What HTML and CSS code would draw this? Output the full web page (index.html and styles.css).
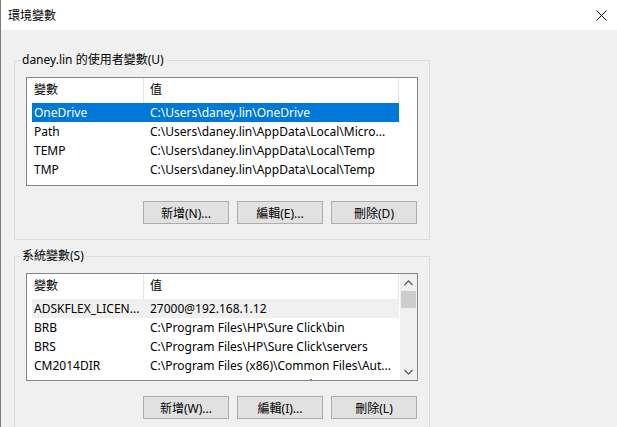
FILE: index.html
```html
<!DOCTYPE html>
<html lang="zh-Hant">
<head>
    <meta charset="UTF-8">
    <title>環境變數</title>
    <link rel="stylesheet" href="styles.css">
</head>
<body>
    <div class="dialog">
        <div class="titlebar">
            <span>環境變數</span>
            <svg class="close" width="11" height="11" viewBox="0 0 11 11">
                <path d="M0.5 0.5 L10.5 10.5 M10.5 0.5 L0.5 10.5" stroke="#000" stroke-width="1" fill="none"/>
            </svg>
        </div>
        <div class="content">
            <fieldset class="group">
                <legend>daney.lin 的使用者變數(U)</legend>
                <div class="list user-list">
                    <div class="rows">
                        <div class="row head"><span class="c1">變數</span><span class="c2">值</span></div>
                        <div class="row selected"><span class="c1">OneDrive</span><span class="c2">C:\Users\daney.lin\OneDrive</span></div>
                        <div class="row"><span class="c1">Path</span><span class="c2">C:\Users\daney.lin\AppData\Local\Micro...</span></div>
                        <div class="row"><span class="c1">TEMP</span><span class="c2">C:\Users\daney.lin\AppData\Local\Temp</span></div>
                        <div class="row"><span class="c1">TMP</span><span class="c2">C:\Users\daney.lin\AppData\Local\Temp</span></div>
                    </div>
                </div>
                <div class="buttons">
                    <button>新增(N)...</button>
                    <button>編輯(E)...</button>
                    <button>刪除(D)</button>
                </div>
            </fieldset>

            <fieldset class="group">
                <legend>系統變數(S)</legend>
                <div class="list system-list">
                    <div class="rows">
                        <div class="row head"><span class="c1">變數</span><span class="c2">值</span></div>
                        <div class="row hover"><span class="c1">ADSKFLEX_LICEN...</span><span class="c2">27000@192.168.1.12</span></div>
                        <div class="row"><span class="c1">BRB</span><span class="c2">C:\Program Files\HP\Sure Click\bin</span></div>
                        <div class="row"><span class="c1">BRS</span><span class="c2">C:\Program Files\HP\Sure Click\servers</span></div>
                        <div class="row"><span class="c1">CM2014DIR</span><span class="c2">C:\Program Files (x86)\Common Files\Aut...</span></div>
                        <div class="row"><span class="c1">ComSpec</span><span class="c2">C:\WINDOWS\system32\cmd.exe</span></div>
                    </div>
                    <div class="scrollbar">
                        <div class="arrow">
                            <svg width="9" height="6" viewBox="0 0 9 6"><path d="M0.5 5 L4.5 1 L8.5 5" stroke="#606060" stroke-width="1.3" fill="none"/></svg>
                        </div>
                        <div class="thumb"></div>
                        <div class="track"></div>
                        <div class="arrow">
                            <svg width="9" height="6" viewBox="0 0 9 6"><path d="M0.5 1 L4.5 5 L8.5 1" stroke="#606060" stroke-width="1.3" fill="none"/></svg>
                        </div>
                    </div>
                </div>
                <div class="buttons">
                    <button>新增(W)...</button>
                    <button>編輯(I)...</button>
                    <button>刪除(L)</button>
                </div>
            </fieldset>
        </div>
    </div>
</body>
</html>
```

FILE: styles.css
```css
body {
    margin: 0;
    font-family: "Noto Sans", "Noto Sans CJK TC", sans-serif;
    font-size: 12px;
    color: #000;
}
.dialog {
    width: 617px;
    height: 427px;
    box-sizing: border-box;
    border-left: 1px solid #7a7a7a;
    background: #f0f0f0;
    overflow: hidden;
}
.titlebar {
    height: 30px;
    background: #fff;
    display: flex;
    align-items: center;
    justify-content: space-between;
    padding: 0 10px 0 7px;
}
.content {
    padding: 22px 0 0 13px;
}
.group {
    width: 416px;
    box-sizing: border-box;
    margin: 0;
    padding: 9px 11px 15px 11px;
    border: 1px solid #dcdcdc;
}
.group + .group {
    margin-top: 8px;
}
.group legend {
    margin-left: -6px;
    padding: 0 2px;
    line-height: 16px;
}
.list {
    display: flex;
    height: 109px;
    box-sizing: border-box;
    background: #fff;
    border: 1px solid #828790;
    overflow: hidden;
}
.system-list {
    height: 108px;
}
.rows {
    width: 367px;
    margin-left: 5px;
}
.row {
    display: flex;
    height: 19px;
    line-height: 19px;
    white-space: nowrap;
}
.row.head {
    height: 25px;
    line-height: 24px;
}
.c1 {
    width: 112px;
    box-sizing: border-box;
    padding-left: 2px;
    overflow: hidden;
    text-overflow: ellipsis;
}
.c2 {
    flex: 1;
    padding-left: 6px;
    overflow: hidden;
    text-overflow: ellipsis;
}
.head .c1,
.head .c2 {
    border-right: 1px solid #e5e5e5;
}
.row.selected {
    background: #0078d7;
    color: #fff;
}
.row.hover {
    background: #f0f0f0;
}
.scrollbar {
    width: 17px;
    margin-left: auto;
    background: #f0f0f0;
    display: flex;
    flex-direction: column;
}
.arrow {
    height: 17px;
    display: flex;
    align-items: center;
    justify-content: center;
}
.thumb {
    height: 17px;
    margin: 0 1px;
    background: #cdcdcd;
}
.track {
    flex: 1;
}
.buttons {
    display: flex;
    justify-content: flex-end;
    gap: 8px;
    margin: 15px 1px 0 0;
}
.buttons button {
    width: 86px;
    height: 23px;
    padding: 0;
    background: #e1e1e1;
    border: 1px solid #adadad;
    font-family: inherit;
    font-size: 12px;
    color: #000;
}
```
